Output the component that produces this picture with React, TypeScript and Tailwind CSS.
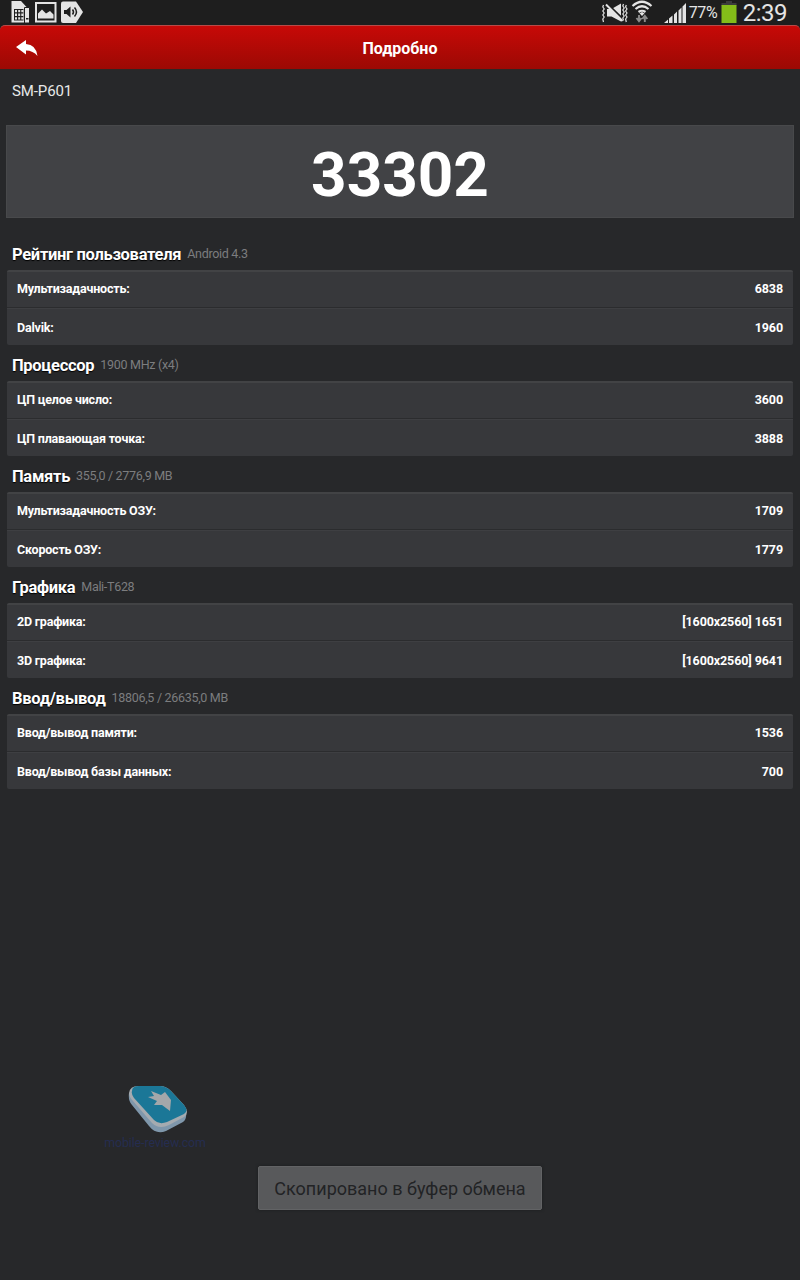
import React from 'react';

interface Row {
  label: string;
  value: string;
}

interface Section {
  title: string;
  note: string;
  rows: Row[];
}

const sections: Section[] = [
  {
    title: 'Рейтинг пользователя',
    note: 'Android 4.3',
    rows: [
      { label: 'Мультизадачность:', value: '6838' },
      { label: 'Dalvik:', value: '1960' },
    ],
  },
  {
    title: 'Процессор',
    note: '1900 MHz (x4)',
    rows: [
      { label: 'ЦП целое число:', value: '3600' },
      { label: 'ЦП плавающая точка:', value: '3888' },
    ],
  },
  {
    title: 'Память',
    note: '355,0 / 2776,9 MB',
    rows: [
      { label: 'Мультизадачность ОЗУ:', value: '1709' },
      { label: 'Скорость ОЗУ:', value: '1779' },
    ],
  },
  {
    title: 'Графика',
    note: 'Mali-T628',
    rows: [
      { label: '2D графика:', value: '[1600x2560] 1651' },
      { label: '3D графика:', value: '[1600x2560] 9641' },
    ],
  },
  {
    title: 'Ввод/вывод',
    note: '18806,5 / 26635,0 MB',
    rows: [
      { label: 'Ввод/вывод памяти:', value: '1536' },
      { label: 'Ввод/вывод базы данных:', value: '700' },
    ],
  },
];

const StatusBar: React.FC = () => (
  <div className="h-[25px] flex items-start justify-between pl-[11px] pr-[13px] text-[#e4e4e4]">
    {/* Notifications */}
    <div className="flex">
      <svg width="19" height="25" viewBox="0 0 19 25" fill="#e4e4e4">
        <path d="M0.500 1H10L15.500 7V22.500H0.500Z" />
        <path d="M3 9H12.500V20.500H3Z" fill="#1e1e1e" />
        <path d="M4 10H6V12.300H4ZM7.200 10H9.200V12.300H7.200ZM10.300 10H12.500V12.300H10.300ZM4 13.500H6V16H4ZM7.200 13.500H9.200V16H7.200ZM10.300 13.500H12.500V16H10.300ZM4 17.200H6V19.500H4ZM7.200 17.200H9.200V19.500H7.200ZM10.300 17.200H12.500V19.500H10.300Z" />
        <path d="M13.500 7.500H18.500V23H13.500Z" stroke="#1e1e1e" />
        <path d="M15 18H17.500V19.500H15Z" fill="#1e1e1e" />
      </svg>
      <svg className="ml-[5px]" width="22" height="25" viewBox="0 0 22 25">
        <rect x="1" y="3" width="19.500" height="18.500" fill="none" stroke="#e4e4e4" strokeWidth="2" />
        <path d="M3 18.500V13.500L7 9.500L11 13.500L15 11L18.500 14.500V18.500Z" fill="#e4e4e4" />
      </svg>
      <svg className="ml-[4px]" width="23" height="25" viewBox="0 0 23 25">
        <path d="M2 1.500H15L22 12L15 23H2Q0 23 0 21V3.500Q0 1.500 2 1.500Z" fill="#e4e4e4" />
        <path d="M3 10H5.500L9.500 6.500V17.500L5.500 14H3Z" fill="#1e1e1e" />
        <path d="M11.500 9.500Q13.500 12 11.500 14.500M13.500 7.500Q17.500 12 13.500 16.500" fill="none" stroke="#1e1e1e" strokeWidth="1.500" />
      </svg>
    </div>

    {/* Connection, battery and clock */}
    <div className="flex">
      <svg width="26" height="25" viewBox="0 0 26 25">
        <path d="M5 9H9.500L19 3.500V21.500L9.500 16.500H5Z" fill="#e4e4e4" />
        <path d="M5.500 4L22 20" stroke="#1e1e1e" strokeWidth="2" />
        <path d="M4 4.500L20.500 21" stroke="#e4e4e4" strokeWidth="2" />
        <path d="M1.500 5L0.800 7L2.200 9L0.800 11L2.200 13L0.800 15L2.200 17L0.800 19L1.500 22M21.500 4L20.800 6L22.200 8L20.800 10L22.200 12L20.800 14L22.200 16L20.800 18L21.500 20.500M24.300 5L23.600 7L25 9L23.600 11L25 13L23.600 15L25 17L23.600 19L24.300 22" fill="none" stroke="#e4e4e4" strokeWidth="1.200" />
      </svg>
      <svg className="ml-[3px]" width="22" height="25" viewBox="0 0 22 25" fill="none">
        <path d="M1.500 6Q11 -2.500 20.500 6M4.500 9Q11 3.500 17.500 9M7.500 12Q11 9.500 14.500 12" stroke="#e4e4e4" strokeWidth="2.200" />
        <path d="M8.500 13.300L11 12L13.500 13.300L11 16Z" fill="#e4e4e4" />
        <path d="M8 15V21M5.500 18L8 21.300L10.500 18M13.800 22V16M11.300 19L13.800 15.700L16.300 19" stroke="#8c8c8c" strokeWidth="1.900" />
      </svg>
      <svg className="ml-[11px]" width="23" height="25" viewBox="0 0 23 25" fill="#e4e4e4">
        <path d="M0 23L4 19.500V23ZM5 18.500L8.500 15.500V23H5ZM10 14.500L13 11.500V23H10ZM14.500 10.500L17.500 7.500V23H14.500ZM18.500 6.500L22 3V23H18.500Z" />
      </svg>
      <span className="ml-[2px] w-[31px] text-[16px] leading-[26px] tracking-[-0.4px]">77%</span>
      <svg className="ml-px" width="18" height="25" viewBox="0 0 18 25">
        <path d="M5 1H11V3H15.500V6H0.500V3H5Z" fill="#3c3c3c" />
        <path d="M0.500 5H15.500V23H0.500Z" fill="#84bd19" />
      </svg>
      <span className="ml-[4px] text-[24px] leading-[26px] tracking-[-0.5px]">2:39</span>
    </div>
  </div>
);

const Header: React.FC = () => (
  <header className="relative h-[44px] flex items-center rounded-t-[5px] border-t border-[#b84a48] bg-linear-to-b from-[#c70907] to-[#9c0904] shadow-[0_1px_0_#302624]">
    <svg className="ml-4 mt-px" width="22" height="17" viewBox="0 0 22 17" fill="#ffffff">
      <path d="M0 7L10 0V4Q20 4.500 21.500 16Q17 10.500 10 10.500V14.500Z" />
    </svg>
    <h1 className="absolute inset-x-0 pt-[2px] text-center text-[16px] font-bold text-white">Подробно</h1>
  </header>
);

const ScoreSection: React.FC<{ section: Section }> = ({ section }) => (
  <section className="h-[111px] px-[7px]">
    <div className="h-8 flex items-center gap-[6px] pl-[5px]">
      <h2 className="pt-[2px] text-[16.500px] tracking-[-0.3px] font-bold text-white [text-shadow:0_1px_1px_#000]">{section.title}</h2>
      <span className="text-[12.500px] tracking-[-0.3px] text-[#7c7d7f]">{section.note}</span>
    </div>
    <div className="h-[75px] rounded-[2px] border-t-2 border-[#424345] bg-[#37383b] text-[12.500px] font-bold text-white">
      {section.rows.map((row, i) => (
        <div
          key={row.label}
          className={
            i === 0
              ? 'h-[36px] flex items-center justify-between px-[10px] border-b border-[#2b2c2e]'
              : 'h-[37px] flex items-center justify-between px-[10px] pt-[2px] border-t border-[#3e3f42]'
          }
        >
          <span className="tracking-[-0.2px]">{row.label}</span>
          <span className="tracking-[-0.1px]">{row.value}</span>
        </div>
      ))}
    </div>
  </section>
);

const Watermark: React.FC = () => (
  <div className="absolute left-[104px] top-[1085px] w-[102px]">
    <svg className="ml-6" width="60" height="48" viewBox="0 0 60 48">
      <path d="M1 8Q0 16 4 20L21 41Q28 50 38 46L55 37Q59 34 58 27L36 16Z" fill="#7f97ab" />
      <path d="M1 8Q2 1 10 1L32 1Q38 1 43 6L56 20Q62 28 56 32L41 40Q31 45 24 38L5 16Q1 12 1 8Z" fill="#a5abb0" />
      <path d="M4 6Q4 1 11 1L32 1Q37 1 42 5L56 20Q61 26 56 29L39 37Q31 40 26 35L6 13Q3 9 4 6Z" fill="#1b7797" />
      <path d="M23 6L33 10L37 7L43 15L42 26L34 20L26 20L29 16L20 12L26 11Z" fill="#a3a7aa" />
    </svg>
    <div className="text-[12.400px] leading-[20px] tracking-[-0.1px] text-center text-[#252d50] whitespace-nowrap">mobile-review.com</div>
  </div>
);

const App: React.FC = () => {
  return (
    <div className="relative w-[800px] h-[1280px] overflow-hidden bg-[#27282a] font-[Roboto,sans-serif]">
      <div className="bg-[#1e1e1e]">
        <StatusBar />
        <Header />
      </div>

      <p className="h-[56px] pl-3 pt-[10px] text-[15px] tracking-[-0.1px] leading-6 text-[#e8e8e8]">SM-P601</p>

      <div className="mx-[6px] h-[93px] pt-[5px] flex items-center justify-center border border-[#48494b] bg-[#414245] text-[62px] font-bold text-white">
        33302
      </div>

      <main className="mt-5">
        {sections.map((section) => (
          <ScoreSection key={section.title} section={section} />
        ))}
      </main>

      <Watermark />

      {/* Toast */}
      <div className="absolute left-[258px] top-[1166px] w-[284px] h-[44px] pt-px flex items-center justify-center rounded-[2px] border border-[#626365] bg-[#58595b] text-[18px] text-[#222325] shadow-[0_0_3px_#1c1d1e] whitespace-nowrap">
        Скопировано в буфер обмена
      </div>
    </div>
  );
};

export default App;
